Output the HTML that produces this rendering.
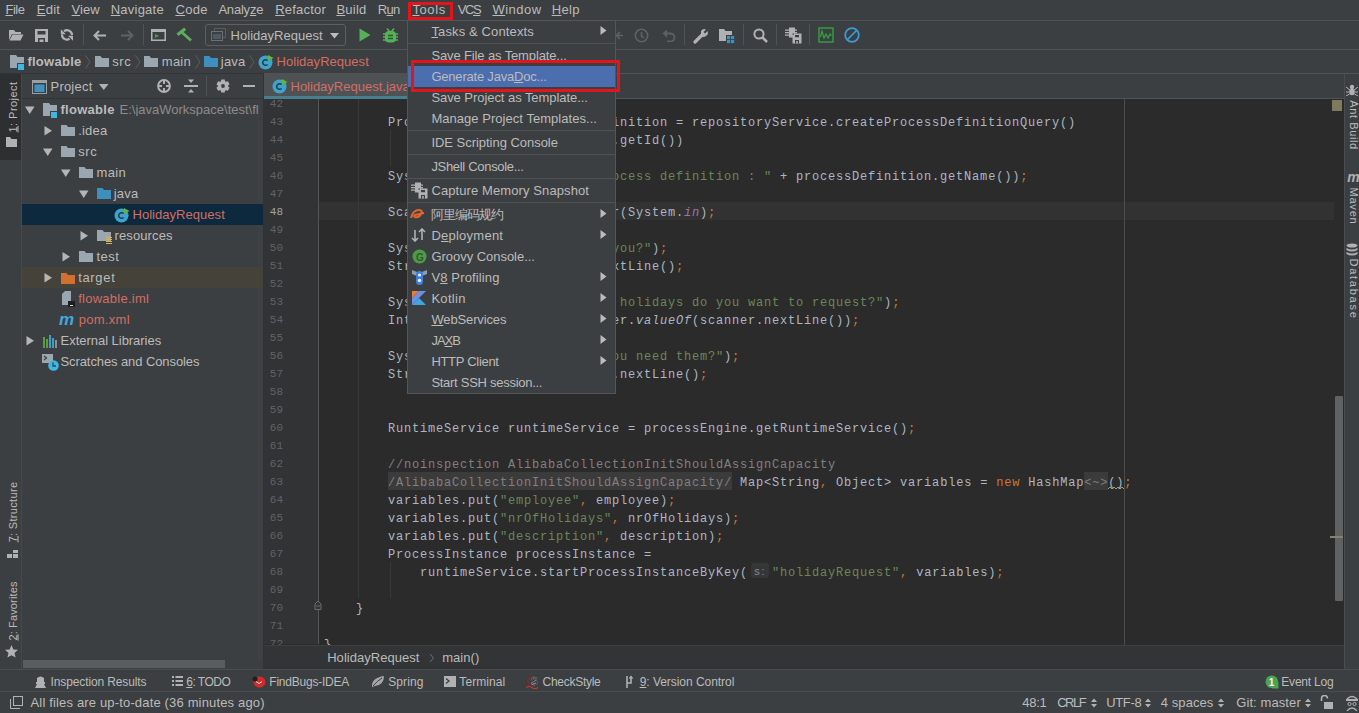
<!DOCTYPE html>
<html><head><meta charset="utf-8"><style>
html,body{margin:0;padding:0;}
body{width:1359px;height:713px;overflow:hidden;position:relative;background:#3C3F41;font-family:"Liberation Sans",sans-serif;color:#BBBBBB;}
div{position:absolute;box-sizing:border-box;}
.t{white-space:pre;}
.m{font-family:"Liberation Mono",monospace;}
u{text-decoration:underline;text-underline-offset:1px;text-decoration-thickness:1px;}
</style></head><body>
<div class="t" style="left:5.4px;top:3px;font-size:13px;line-height:13px;color:#BBBBBB;letter-spacing:-0.431px;"><u>F</u>ile</div><div class="t" style="left:36.7px;top:3px;font-size:13px;line-height:13px;color:#BBBBBB;letter-spacing:0.285px;"><u>E</u>dit</div><div class="t" style="left:71.60000000000001px;top:3px;font-size:13px;line-height:13px;color:#BBBBBB;letter-spacing:0.036px;"><u>V</u>iew</div><div class="t" style="left:110.7px;top:3px;font-size:13px;line-height:13px;color:#BBBBBB;letter-spacing:0.235px;"><u>N</u>avigate</div><div class="t" style="left:175.39999999999998px;top:3px;font-size:13px;line-height:13px;color:#BBBBBB;letter-spacing:0.361px;"><u>C</u>ode</div><div class="t" style="left:218.39999999999998px;top:3px;font-size:13px;line-height:13px;color:#BBBBBB;letter-spacing:-0.198px;">Analy<u>z</u>e</div><div class="t" style="left:275.2px;top:3px;font-size:13px;line-height:13px;color:#BBBBBB;letter-spacing:0.203px;"><u>R</u>efactor</div><div class="t" style="left:336.4px;top:3px;font-size:13px;line-height:13px;color:#BBBBBB;letter-spacing:0.235px;"><u>B</u>uild</div><div class="t" style="left:377.8px;top:3px;font-size:13px;line-height:13px;color:#BBBBBB;letter-spacing:-0.700px;">R<u>u</u>n</div><div class="t" style="left:412.4px;top:3px;font-size:13px;line-height:13px;color:#BBBBBB;letter-spacing:0.600px;"><u>T</u>ools</div><div class="t" style="left:457.7px;top:3px;font-size:13px;line-height:13px;color:#BBBBBB;letter-spacing:-1.337px;">VC<u>S</u></div><div class="t" style="left:492.4px;top:3px;font-size:13px;line-height:13px;color:#BBBBBB;letter-spacing:0.482px;"><u>W</u>indow</div><div class="t" style="left:551.7px;top:3px;font-size:13px;line-height:13px;color:#BBBBBB;letter-spacing:0.370px;"><u>H</u>elp</div><div style="left:0px;top:20px;width:1359px;height:1px;background:#515456;"></div><div style="left:0px;top:49px;width:1359px;height:1px;background:#515456;"></div><div style="left:0px;top:73px;width:264px;height:1px;background:#323436;"></div><div style="left:264px;top:73px;width:1095px;height:1px;background:#515456;"></div><div style="left:0px;top:74px;width:21px;height:595px;background:#3C3F41;"></div><div style="left:0px;top:74px;width:21px;height:86px;background:#2D2F30;"></div><div style="left:21px;top:74px;width:1px;height:595px;background:#46494B;"></div><div style="left:22px;top:98px;width:242px;height:1px;background:#323436;"></div><div style="left:264px;top:74px;width:1080px;height:24px;background:#3C3F41;"></div><div style="left:264px;top:73px;width:144px;height:23px;background:#4E5254;"></div><div style="left:264px;top:98px;width:1080px;height:1px;background:#515456;"></div><div style="left:264px;top:96px;width:144px;height:3px;background:#4A7E8F;"></div><div style="left:258px;top:99px;width:5px;height:561px;background:#3E4143;"></div><div style="left:263px;top:74px;width:1px;height:595px;background:#323232;"></div><div style="left:264px;top:99px;width:54px;height:546px;background:#313335;"></div><div style="left:318px;top:99px;width:1px;height:546px;background:#555555;"></div><div style="left:319px;top:99px;width:1025px;height:546px;background:#2B2B2B;"></div><div style="left:1344px;top:74px;width:15px;height:595px;background:#3C3F41;"></div><div style="left:1344px;top:74px;width:1px;height:595px;background:#4A4D4F;"></div><div style="left:264px;top:645px;width:1080px;height:24px;background:#323436;"></div><div style="left:264px;top:644px;width:1080px;height:1px;background:#2B2B2B;"></div><div style="left:0px;top:669px;width:1359px;height:1px;background:#4A4D4F;"></div><div style="left:0px;top:691px;width:1359px;height:1px;background:#4A4D4F;"></div><div style="left:319px;top:202px;width:1015px;height:18px;background:#323232;"></div><div style="left:1124px;top:99px;width:1px;height:546px;background:#4D4D4D;"></div><div style="left:358px;top:99px;width:1px;height:499px;background:#393939;"></div><div style="left:390px;top:130px;width:1px;height:36px;background:#393939;"></div><div style="left:390px;top:562px;width:1px;height:36px;background:#393939;"></div><div style="left:388px;top:472px;width:344px;height:18px;background:#3B3B3B;"></div><div style="left:1084px;top:472px;width:24px;height:18px;background:#3B3B3B;"></div><div class="t m" style="left:265px;top:94.5px;width:18px;font-size:11px;line-height:18px;color:#606366;text-align:right">42</div><div class="t m" style="left:265px;top:112.5px;width:18px;font-size:11px;line-height:18px;color:#606366;text-align:right">43</div><div class="t m" style="left:265px;top:130.5px;width:18px;font-size:11px;line-height:18px;color:#606366;text-align:right">44</div><div class="t m" style="left:265px;top:148.5px;width:18px;font-size:11px;line-height:18px;color:#606366;text-align:right">45</div><div class="t m" style="left:265px;top:166.5px;width:18px;font-size:11px;line-height:18px;color:#606366;text-align:right">46</div><div class="t m" style="left:265px;top:184.5px;width:18px;font-size:11px;line-height:18px;color:#606366;text-align:right">47</div><div class="t m" style="left:265px;top:202.5px;width:18px;font-size:11px;line-height:18px;color:#A4A3A3;text-align:right">48</div><div class="t m" style="left:265px;top:220.5px;width:18px;font-size:11px;line-height:18px;color:#606366;text-align:right">49</div><div class="t m" style="left:265px;top:238.5px;width:18px;font-size:11px;line-height:18px;color:#606366;text-align:right">50</div><div class="t m" style="left:265px;top:256.5px;width:18px;font-size:11px;line-height:18px;color:#606366;text-align:right">51</div><div class="t m" style="left:265px;top:274.5px;width:18px;font-size:11px;line-height:18px;color:#606366;text-align:right">52</div><div class="t m" style="left:265px;top:292.5px;width:18px;font-size:11px;line-height:18px;color:#606366;text-align:right">53</div><div class="t m" style="left:265px;top:310.5px;width:18px;font-size:11px;line-height:18px;color:#606366;text-align:right">54</div><div class="t m" style="left:265px;top:328.5px;width:18px;font-size:11px;line-height:18px;color:#606366;text-align:right">55</div><div class="t m" style="left:265px;top:346.5px;width:18px;font-size:11px;line-height:18px;color:#606366;text-align:right">56</div><div class="t m" style="left:265px;top:364.5px;width:18px;font-size:11px;line-height:18px;color:#606366;text-align:right">57</div><div class="t m" style="left:265px;top:382.5px;width:18px;font-size:11px;line-height:18px;color:#606366;text-align:right">58</div><div class="t m" style="left:265px;top:400.5px;width:18px;font-size:11px;line-height:18px;color:#606366;text-align:right">59</div><div class="t m" style="left:265px;top:418.5px;width:18px;font-size:11px;line-height:18px;color:#606366;text-align:right">60</div><div class="t m" style="left:265px;top:436.5px;width:18px;font-size:11px;line-height:18px;color:#606366;text-align:right">61</div><div class="t m" style="left:265px;top:454.5px;width:18px;font-size:11px;line-height:18px;color:#606366;text-align:right">62</div><div class="t m" style="left:265px;top:472.5px;width:18px;font-size:11px;line-height:18px;color:#606366;text-align:right">63</div><div class="t m" style="left:265px;top:490.5px;width:18px;font-size:11px;line-height:18px;color:#606366;text-align:right">64</div><div class="t m" style="left:265px;top:508.5px;width:18px;font-size:11px;line-height:18px;color:#606366;text-align:right">65</div><div class="t m" style="left:265px;top:526.5px;width:18px;font-size:11px;line-height:18px;color:#606366;text-align:right">66</div><div class="t m" style="left:265px;top:544.5px;width:18px;font-size:11px;line-height:18px;color:#606366;text-align:right">67</div><div class="t m" style="left:265px;top:562.5px;width:18px;font-size:11px;line-height:18px;color:#606366;text-align:right">68</div><div class="t m" style="left:265px;top:580.5px;width:18px;font-size:11px;line-height:18px;color:#606366;text-align:right">69</div><div class="t m" style="left:265px;top:598.5px;width:18px;font-size:11px;line-height:18px;color:#606366;text-align:right">70</div><div class="t m" style="left:265px;top:616.5px;width:18px;font-size:11px;line-height:18px;color:#606366;text-align:right">71</div><div class="t m" style="left:265px;top:634.5px;width:18px;font-size:11px;line-height:18px;color:#606366;text-align:right">72</div><div class="t m" style="left:324px;top:114px;font-size:12px;letter-spacing:0.8px;line-height:18px;color:#A9B7C6"><span style="color:#A9B7C6;">        ProcessDefinition processDefinition = repositoryService.createProcessDefinitionQuery()</span></div><div class="t m" style="left:324px;top:132px;font-size:12px;letter-spacing:0.8px;line-height:18px;color:#A9B7C6"><span style="color:#A9B7C6;">            .deploymentId(deployment.getId())</span></div><div class="t m" style="left:324px;top:150px;font-size:12px;letter-spacing:0.8px;line-height:18px;color:#A9B7C6"><span style="color:#A9B7C6;">            .singleResult()</span><span style="color:#CC7832;">;</span></div><div class="t m" style="left:324px;top:168px;font-size:12px;letter-spacing:0.8px;line-height:18px;color:#A9B7C6"><span style="color:#A9B7C6;">        System.out.println(</span><span style="color:#6A8759;">&quot;Found process definition : &quot;</span><span style="color:#A9B7C6;"> + processDefinition.getName())</span><span style="color:#CC7832;">;</span></div><div class="t m" style="left:324px;top:204px;font-size:12px;letter-spacing:0.8px;line-height:18px;color:#A9B7C6"><span style="color:#A9B7C6;">        Scanner scanner = </span><span style="color:#CC7832;">new</span><span style="color:#A9B7C6;"> Scanner(System.</span><span style="color:#9876AA;font-style:italic">in</span><span style="color:#A9B7C6;">)</span><span style="color:#CC7832;">;</span></div><div class="t m" style="left:324px;top:240px;font-size:12px;letter-spacing:0.8px;line-height:18px;color:#A9B7C6"><span style="color:#A9B7C6;">        System.out.println(</span><span style="color:#6A8759;">&quot;Who are you?&quot;</span><span style="color:#A9B7C6;">)</span><span style="color:#CC7832;">;</span></div><div class="t m" style="left:324px;top:258px;font-size:12px;letter-spacing:0.8px;line-height:18px;color:#A9B7C6"><span style="color:#A9B7C6;">        String employee = scanner.nextLine()</span><span style="color:#CC7832;">;</span></div><div class="t m" style="left:324px;top:294px;font-size:12px;letter-spacing:0.8px;line-height:18px;color:#A9B7C6"><span style="color:#A9B7C6;">        System.out.println(</span><span style="color:#6A8759;">&quot;How many holidays do you want to request?&quot;</span><span style="color:#A9B7C6;">)</span><span style="color:#CC7832;">;</span></div><div class="t m" style="left:324px;top:312px;font-size:12px;letter-spacing:0.8px;line-height:18px;color:#A9B7C6"><span style="color:#A9B7C6;">        Integer nrOfHolidays = Integer.</span><span style="color:#A9B7C6;font-style:italic">valueOf</span><span style="color:#A9B7C6;">(scanner.nextLine())</span><span style="color:#CC7832;">;</span></div><div class="t m" style="left:324px;top:348px;font-size:12px;letter-spacing:0.8px;line-height:18px;color:#A9B7C6"><span style="color:#A9B7C6;">        System.out.println(</span><span style="color:#6A8759;">&quot;Why do you need them?&quot;</span><span style="color:#A9B7C6;">)</span><span style="color:#CC7832;">;</span></div><div class="t m" style="left:324px;top:366px;font-size:12px;letter-spacing:0.8px;line-height:18px;color:#A9B7C6"><span style="color:#A9B7C6;">        String description = scanner.nextLine()</span><span style="color:#CC7832;">;</span></div><div class="t m" style="left:324px;top:420px;font-size:12px;letter-spacing:0.8px;line-height:18px;color:#A9B7C6"><span style="color:#A9B7C6;">        RuntimeService runtimeService = processEngine.getRuntimeService()</span><span style="color:#CC7832;">;</span></div><div class="t m" style="left:324px;top:456px;font-size:12px;letter-spacing:0.8px;line-height:18px;color:#A9B7C6"><span style="color:#A9B7C6;">        </span><span style="color:#808080;">//noinspection AlibabaCollectionInitShouldAssignCapacity</span></div><div class="t m" style="left:324px;top:474px;font-size:12px;letter-spacing:0.8px;line-height:18px;color:#A9B7C6"><span style="color:#A9B7C6;">        </span><span style="color:#808080;">/AlibabaCollectionInitShouldAssignCapacity/</span><span style="color:#A9B7C6;"> Map&lt;String</span><span style="color:#CC7832;">,</span><span style="color:#A9B7C6;"> Object&gt; variables = </span><span style="color:#CC7832;">new</span><span style="color:#A9B7C6;"> HashMap</span><span style="color:#808080;">&lt;~&gt;</span><span style="color:#A9B7C6;">()</span><span style="color:#CC7832;">;</span></div><div class="t m" style="left:324px;top:492px;font-size:12px;letter-spacing:0.8px;line-height:18px;color:#A9B7C6"><span style="color:#A9B7C6;">        variables.put(</span><span style="color:#6A8759;">&quot;employee&quot;</span><span style="color:#CC7832;">,</span><span style="color:#A9B7C6;"> employee)</span><span style="color:#CC7832;">;</span></div><div class="t m" style="left:324px;top:510px;font-size:12px;letter-spacing:0.8px;line-height:18px;color:#A9B7C6"><span style="color:#A9B7C6;">        variables.put(</span><span style="color:#6A8759;">&quot;nrOfHolidays&quot;</span><span style="color:#CC7832;">,</span><span style="color:#A9B7C6;"> nrOfHolidays)</span><span style="color:#CC7832;">;</span></div><div class="t m" style="left:324px;top:528px;font-size:12px;letter-spacing:0.8px;line-height:18px;color:#A9B7C6"><span style="color:#A9B7C6;">        variables.put(</span><span style="color:#6A8759;">&quot;description&quot;</span><span style="color:#CC7832;">,</span><span style="color:#A9B7C6;"> description)</span><span style="color:#CC7832;">;</span></div><div class="t m" style="left:324px;top:546px;font-size:12px;letter-spacing:0.8px;line-height:18px;color:#A9B7C6"><span style="color:#A9B7C6;">        ProcessInstance processInstance =</span></div><div class="t m" style="left:324px;top:564px;font-size:12px;letter-spacing:0.8px;line-height:18px;color:#A9B7C6"><span style="color:#A9B7C6;">            runtimeService.startProcessInstanceByKey(</span><span style="color:#A9B7C6;">   </span><span style="color:#6A8759;">&quot;holidayRequest&quot;</span><span style="color:#CC7832;">,</span><span style="color:#A9B7C6;"> variables)</span><span style="color:#CC7832;">;</span></div><div class="t m" style="left:324px;top:600px;font-size:12px;letter-spacing:0.8px;line-height:18px;color:#A9B7C6"><span style="color:#A9B7C6;">    }</span></div><div class="t m" style="left:324px;top:636px;font-size:12px;letter-spacing:0.8px;line-height:18px;color:#A9B7C6"><span style="color:#A9B7C6;">}</span></div><div style="left:751px;top:563px;width:18px;height:15px;background:#363636;border-radius:3px"></div><div class="t" style="left:754.3px;top:566px;font-size:11px;line-height:11px;color:#8A8A8A;letter-spacing:1.758px;">s:</div><div style="left:264px;top:645px;width:1080px;height:24px;background:#323436;"></div><div style="left:264px;top:645px;width:1080px;height:1px;background:#3E4042;"></div><div style="left:264px;top:667px;width:1080px;height:2px;background:#2F3133;"></div><div class="t" style="left:327.2px;top:651px;font-size:13px;line-height:13px;color:#BBBBBB;letter-spacing:0.037px;">HolidayRequest</div><div class="t" style="left:442.2px;top:651px;font-size:13px;line-height:13px;color:#BBBBBB;letter-spacing:0.063px;">main()</div><svg style="position:absolute;left:429px;top:653px;" width="6" height="10" viewBox="0 0 6 10"><path d="M1 1 L4.5 5 L1 9" stroke="#6E6E6E" fill="none" stroke-width="1"/></svg><div style="left:1335px;top:396px;width:8px;height:205px;background:#5F6163;border-radius:1px"></div><div style="left:1332px;top:100px;width:10px;height:11px;background:#7F7A5E;"></div><div style="left:1330px;top:536px;width:13px;height:2px;background:#858270;"></div><svg style="position:absolute;left:9px;top:30px;" width="15" height="11" viewBox="0 0 15 11"><path d="M0 0 H5 L6.5 2 H12 V4 H3 L0 10 Z" fill="#AFB1B3"/><path d="M3.5 4.5 H14.5 L11.5 10.5 H0.5 Z" fill="#AFB1B3"/></svg><svg style="position:absolute;left:35px;top:29px;" width="13" height="13" viewBox="0 0 13 13"><path d="M0 0 H13 V13 H0 Z M2.5 2 V5.5 H10.5 V2 Z M3 9 V13 H10 V9 Z" fill="#AFB1B3" fill-rule="evenodd"/><rect x="4.5" y="10.5" width="4" height="2.5" fill="#AFB1B3"/></svg><svg style="position:absolute;left:60px;top:28px;" width="14" height="14" viewBox="0 0 14 14"><path d="M4 3.3 A4.9 4.9 0 0 1 12 7" stroke="#AFB1B3" stroke-width="2.2" fill="none"/><path d="M2 6.5 A4.9 4.9 0 0 0 9.5 10.8" stroke="#AFB1B3" stroke-width="2.2" fill="none"/><path d="M0.8 1.2 V6.2 H5.8 Z" fill="#AFB1B3"/><path d="M13 12.8 V7.8 H8 Z" fill="#AFB1B3"/></svg><div style="left:83px;top:24px;width:1px;height:21px;background:#515456;"></div><svg style="position:absolute;left:93px;top:30px;" width="14" height="11" viewBox="0 0 14 11"><path d="M13 5.5 H2 M6 1 L1.5 5.5 L6 10" stroke="#AFB1B3" stroke-width="2" fill="none"/></svg><svg style="position:absolute;left:120px;top:30px;" width="14" height="11" viewBox="0 0 14 11"><path d="M1 5.5 H12 M8 1 L12.5 5.5 L8 10" stroke="#5E6163" stroke-width="2" fill="none"/></svg><div style="left:143px;top:24px;width:1px;height:21px;background:#515456;"></div><svg style="position:absolute;left:151px;top:29px;" width="15" height="12" viewBox="0 0 15 12"><rect x="0.75" y="0.75" width="13.5" height="10.5" fill="none" stroke="#AFB1B3" stroke-width="1.5"/><rect x="1" y="1" width="13" height="2" fill="#AFB1B3"/><path d="M4 5 L8 7 L4 9 Z" fill="#499C54"/></svg><svg style="position:absolute;left:176px;top:27px;" width="17" height="16" viewBox="0 0 17 16"><path d="M1.5 7.8 L9.2 1.8" stroke="#5BAE5F" stroke-width="3.2"/><path d="M5.5 5 L15 13.5" stroke="#5BAE5F" stroke-width="2.8"/></svg><div style="left:205px;top:24px;width:141px;height:22px;background:transparent;border:1px solid #5E6060;border-radius:3px"></div><svg style="position:absolute;left:211px;top:28px;" width="15" height="13" viewBox="0 0 15 13"><rect x="3.5" y="0.5" width="11" height="9" fill="none" stroke="#5A5D5F"/><rect x="0.5" y="3.5" width="11" height="9" fill="#3C3F41" stroke="#6C7072"/><rect x="2" y="6" width="8" height="5" fill="#4D5B66"/></svg><div class="t" style="left:230.6px;top:29px;font-size:13px;line-height:13px;color:#BBBBBB;letter-spacing:0.014px;">HolidayRequest</div><svg style="position:absolute;left:330px;top:33px;" width="9" height="6" viewBox="0 0 9 6"><path d="M0 0 H9 L4.5 5.5 Z" fill="#BBBBBB"/></svg><svg style="position:absolute;left:359px;top:28px;" width="12" height="14" viewBox="0 0 12 14"><path d="M0.5 0.5 L11.5 7 L0.5 13.5 Z" fill="#55B058"/></svg><svg style="position:absolute;left:383px;top:28px;" width="15" height="15" viewBox="0 0 15 15"><rect x="2" y="3" width="11" height="11.5" rx="4" fill="#55B058"/><path d="M4 0.5 L6.5 3.5 M11 0.5 L8.5 3.5" stroke="#55B058" stroke-width="1.6"/><path d="M0 6 H3 M0 9 H3 M0 12 H3 M12 6 H15 M12 9 H15 M12 12 H15" stroke="#55B058" stroke-width="1.5"/><path d="M5 7.5 H10 M5 10.5 H10" stroke="#2E5A30" stroke-width="1.3"/></svg><svg style="position:absolute;left:615px;top:30px;" width="9" height="11" viewBox="0 0 9 11"><path d="M8 5.5 H2 M5 2 L1.5 5.5 L5 9" stroke="#5E6163" stroke-width="1.6" fill="none"/><path d="M0.5 0 V11" stroke="#5E6163" stroke-width="1.2"/></svg><svg style="position:absolute;left:634px;top:28px;" width="15" height="15" viewBox="0 0 15 15"><circle cx="7.5" cy="7.5" r="6.2" stroke="#5E6163" stroke-width="1.6" fill="none"/><path d="M7.5 4 V8 L10 10" stroke="#5E6163" stroke-width="1.6" fill="none"/></svg><svg style="position:absolute;left:662px;top:29px;" width="14" height="13" viewBox="0 0 14 13"><path d="M4 4.5 H8.5 A4 4 0 0 1 8.5 12.5 H5" stroke="#5E6163" stroke-width="1.8" fill="none"/><path d="M0.5 4.5 L5 0.5 V8.5 Z" fill="#5E6163"/></svg><div style="left:684px;top:24px;width:1px;height:21px;background:#515456;"></div><svg style="position:absolute;left:693px;top:28px;" width="16" height="16" viewBox="0 0 16 16"><path d="M2 14 L9 7" stroke="#AFB1B3" stroke-width="3.2" stroke-linecap="round"/><path d="M8 3 A4 4 0 0 1 13 1.5 L10.5 4 L12 5.5 L14.5 3 A4 4 0 0 1 13 8 A4 4 0 0 1 8 8 Z" fill="#AFB1B3"/></svg><svg style="position:absolute;left:719px;top:28px;" width="16" height="16" viewBox="0 0 16 16"><path d="M0 1 H5 L6.5 3 H13 V7 H7 V13 H0 Z" fill="#AFB1B3"/><rect x="8" y="8" width="3.2" height="3.2" fill="#3592C4"/><rect x="12" y="8" width="3.2" height="3.2" fill="#3592C4"/><rect x="8" y="12" width="3.2" height="3.2" fill="#3592C4"/><rect x="12" y="12" width="3.2" height="3.2" fill="#3592C4"/></svg><div style="left:743px;top:24px;width:1px;height:21px;background:#515456;"></div><svg style="position:absolute;left:753px;top:28px;" width="15" height="15" viewBox="0 0 15 15"><circle cx="6" cy="6" r="4.6" stroke="#AFB1B3" stroke-width="2" fill="none"/><path d="M9.5 9.5 L14 14" stroke="#AFB1B3" stroke-width="2.6"/></svg><div style="left:776px;top:24px;width:1px;height:21px;background:#515456;"></div><svg style="position:absolute;left:785px;top:27px;" width="17" height="17" viewBox="0 0 17 17"><path d="M0 3.2 H12 M0 5.7 H12 M0 8.2 H12" stroke="#AFB1B3" stroke-width="1.2"/><rect x="4" y="0.5" width="6" height="10" fill="#AFB1B3"/><rect x="7.5" y="6.5" width="9" height="10" fill="#AFB1B3"/><rect x="7.5" y="6.5" width="1.5" height="1.2" fill="#3C3F41"/><rect x="10" y="8" width="4" height="2.2" fill="#3C3F41"/><rect x="10" y="13" width="4" height="3.5" fill="#3C3F41"/><rect x="11.2" y="14" width="1.6" height="2.5" fill="#AFB1B3"/></svg><div style="left:809px;top:24px;width:1px;height:21px;background:#515456;"></div><svg style="position:absolute;left:818px;top:27px;" width="16" height="16" viewBox="0 0 16 16"><rect x="1" y="1" width="14" height="14" fill="none" stroke="#33A23F" stroke-width="1.4"/><path d="M2.5 10 L4 4 L6 11 L8 7 L10 11 L12 7 L13.5 9" stroke="#33A23F" stroke-width="1.2" fill="none"/></svg><svg style="position:absolute;left:844px;top:27px;" width="16" height="16" viewBox="0 0 16 16"><circle cx="8" cy="8" r="6.8" stroke="#3D9BD6" stroke-width="1.7" fill="none"/><path d="M3.5 12.5 L12.5 3.5" stroke="#3D9BD6" stroke-width="1.7"/></svg><svg style="position:absolute;left:10px;top:55px;" width="15" height="15" viewBox="0 0 15 15"><path d="M0 0 H6 L7.5 2 H14 V8 H7 V13 H0 Z" fill="#9AA7B0"/><rect x="8" y="9" width="6" height="6" fill="#40B6E0"/></svg><div class="t" style="left:27.4px;top:55px;font-size:13px;line-height:13px;color:#BBBBBB;font-weight:bold;letter-spacing:0.263px;">flowable</div><svg style="position:absolute;left:85px;top:55px;" width="6" height="14" viewBox="0 0 6 14"><path d="M0.5 0.5 L5 7 L0.5 13.5" stroke="#5C5F61" fill="none" stroke-width="1"/></svg><svg style="position:absolute;left:95px;top:56px;" width="14" height="11" viewBox="0 0 14 11"><path d="M0 0 H5.5 L7 2 H14 V11 H0 Z" fill="#9AA7B0"/></svg><div class="t" style="left:112.2px;top:55px;font-size:13px;line-height:13px;color:#BBBBBB;letter-spacing:0.608px;">src</div><svg style="position:absolute;left:135px;top:55px;" width="6" height="14" viewBox="0 0 6 14"><path d="M0.5 0.5 L5 7 L0.5 13.5" stroke="#5C5F61" fill="none" stroke-width="1"/></svg><svg style="position:absolute;left:144px;top:56px;" width="14" height="11" viewBox="0 0 14 11"><path d="M0 0 H5.5 L7 2 H14 V11 H0 Z" fill="#9AA7B0"/></svg><div class="t" style="left:161.79999999999998px;top:55px;font-size:13px;line-height:13px;color:#BBBBBB;letter-spacing:0.257px;">main</div><svg style="position:absolute;left:195px;top:55px;" width="6" height="14" viewBox="0 0 6 14"><path d="M0.5 0.5 L5 7 L0.5 13.5" stroke="#5C5F61" fill="none" stroke-width="1"/></svg><svg style="position:absolute;left:203.7px;top:56px;" width="14" height="11" viewBox="0 0 14 11"><path d="M0 0 H5.5 L7 2 H14 V11 H0 Z" fill="#3D8FBD"/></svg><div class="t" style="left:220.79999999999998px;top:55px;font-size:13px;line-height:13px;color:#BBBBBB;letter-spacing:0.200px;">java</div><svg style="position:absolute;left:249px;top:55px;" width="6" height="14" viewBox="0 0 6 14"><path d="M0.5 0.5 L5 7 L0.5 13.5" stroke="#5C5F61" fill="none" stroke-width="1"/></svg><svg style="position:absolute;left:258px;top:54px;" width="16" height="16" viewBox="0 0 16 16"><circle cx="7.5" cy="8.5" r="7" fill="#40A3C9"/><path d="M9.6 6.6 A2.8 2.8 0 1 0 9.6 10.4" stroke="#1E3D52" stroke-width="1.5" fill="none"/><path d="M10 1 L15.5 4 L10 7 Z" fill="#62B543"/></svg><div class="t" style="left:276.59999999999997px;top:55px;font-size:13px;line-height:13px;color:#D26E63;letter-spacing:0.029px;">HolidayRequest</div><div class="t" style="left:3px;top:143px;width:16px;height:16px;"></div><div style="left:12.6px;top:107.36951388888887px;width:0;height:0"><div class="t" style="left:0;top:0;font-size:11px;line-height:11px;color:#BBBBBB;letter-spacing:0.439px;transform:translate(-50%,-50%) rotate(-90deg)"><u>1</u>: Project</div></div><div style="left:12.6px;top:511.6573011363636px;width:0;height:0"><div class="t" style="left:0;top:0;font-size:11px;line-height:11px;color:#BBBBBB;letter-spacing:0.315px;transform:translate(-50%,-50%) rotate(-90deg)"><u>7</u>: Structure</div></div><div style="left:12.6px;top:610.9205113636364px;width:0;height:0"><div class="t" style="left:0;top:0;font-size:11px;line-height:11px;color:#BBBBBB;letter-spacing:0.141px;transform:translate(-50%,-50%) rotate(-90deg)"><u>2</u>: Favorites</div></div><div style="left:1353px;top:125.006953125px;width:0;height:0"><div class="t" style="left:0;top:0;font-size:11px;line-height:11px;color:#BBBBBB;letter-spacing:0.586px;transform:translate(-50%,-50%) rotate(90deg)">Ant Build</div></div><div style="left:1353px;top:206.08890625px;width:0;height:0"><div class="t" style="left:0;top:0;font-size:11px;line-height:11px;color:#BBBBBB;letter-spacing:0.822px;transform:translate(-50%,-50%) rotate(90deg)">Maven</div></div><div style="left:1353px;top:289.12669642857145px;width:0;height:0"><div class="t" style="left:0;top:0;font-size:11px;line-height:11px;color:#BBBBBB;letter-spacing:1.747px;transform:translate(-50%,-50%) rotate(90deg)">Database</div></div><svg style="position:absolute;left:6px;top:137px;" width="11" height="10" viewBox="0 0 11 10"><path d="M0 0 H4 L5.5 2 H11 V10 H0 Z" fill="#AFB1B3"/></svg><svg style="position:absolute;left:7px;top:550px;" width="12" height="8" viewBox="0 0 12 8"><rect x="0" y="4" width="5" height="4" fill="#AFB1B3"/><rect x="6" y="4" width="5" height="4" fill="#AFB1B3"/><rect x="6" y="0" width="5" height="3" fill="#AFB1B3"/></svg><svg style="position:absolute;left:5px;top:645px;" width="13" height="13" viewBox="0 0 13 13"><path d="M6.5 0 L8.4 4.4 L13 4.8 L9.5 8 L10.6 12.6 L6.5 10.2 L2.4 12.6 L3.5 8 L0 4.8 L4.6 4.4 Z" fill="#AFB1B3"/></svg><svg style="position:absolute;left:32px;top:80px;" width="15" height="14" viewBox="0 0 15 14"><rect x="0.5" y="0.5" width="14" height="13" fill="none" stroke="#9C9EA0"/><rect x="1" y="1" width="13" height="2" fill="#9C9EA0"/><rect x="2" y="4" width="11" height="8.5" fill="#4690BA" stroke="#27465A" stroke-width="1"/></svg><div class="t" style="left:50.5px;top:80px;font-size:13px;line-height:13px;color:#BBBBBB;letter-spacing:0.215px;">Project</div><svg style="position:absolute;left:99px;top:84px;" width="10" height="7" viewBox="0 0 10 7"><path d="M0 0 H9.5 L4.75 6 Z" fill="#AFB1B3"/></svg><svg style="position:absolute;left:157px;top:79px;" width="14" height="14" viewBox="0 0 14 14"><circle cx="7" cy="7" r="5.9" stroke="#AFB1B3" stroke-width="2" fill="none"/><path d="M7 1 V5 M7 9 V13 M1 7 H5 M9 7 H13" stroke="#AFB1B3" stroke-width="2"/></svg><svg style="position:absolute;left:184px;top:79px;" width="14" height="14" viewBox="0 0 14 14"><path d="M0 7 H14" stroke="#AFB1B3" stroke-width="2"/><path d="M4 0.5 H10 L7 4 Z M4 13.5 H10 L7 10 Z" fill="#AFB1B3"/></svg><div style="left:206px;top:76px;width:1px;height:20px;background:#515456;"></div><svg style="position:absolute;left:216px;top:79px;" width="14" height="14" viewBox="0 0 14 14"><path d="M5.35 0.40 L8.65 0.40 L9.19 2.51 L9.80 2.85 L11.89 2.28 L13.54 5.13 L11.99 6.65 L11.99 7.35 L13.54 8.87 L11.89 11.72 L9.80 11.15 L9.19 11.49 L8.65 13.60 L5.35 13.60 L4.81 11.49 L4.20 11.15 L2.11 11.72 L0.46 8.87 L2.01 7.35 L2.01 6.65 L0.46 5.13 L2.11 2.28 L4.20 2.85 L4.81 2.51 Z" fill="#AFB1B3"/><circle cx="7" cy="7" r="1.9" fill="#3C3F41"/></svg><div style="left:243px;top:85px;width:12px;height:2px;background:#AFB1B3;"></div><div style="left:22px;top:204px;width:241px;height:21px;background:#0D293E;"></div><div style="left:22px;top:267px;width:241px;height:21px;background:#45423A;"></div><svg style="position:absolute;left:25px;top:106px;" width="10" height="9" viewBox="0 0 10 9"><path d="M0 0.5 H9.5 L4.75 8 Z" fill="#B3B5B7"/></svg><svg style="position:absolute;left:43px;top:103px;" width="15" height="15" viewBox="0 0 15 15"><path d="M0 0 H6 L7.5 2 H14 V8 H7 V13 H0 Z" fill="#9AA7B0"/><rect x="8" y="9" width="6" height="6" fill="#40B6E0"/></svg><div class="t" style="left:60.400000000000006px;top:103px;font-size:13px;line-height:13px;color:#BBBBBB;font-weight:bold;letter-spacing:0.292px;">flowable</div><div class="t" style="left:119.5px;top:103px;font-size:13px;line-height:13px;color:#8C8C8C;width:143px;overflow:hidden;">E:\javaWorkspace\test\flowable</div><div style="left:259px;top:99px;width:4px;height:21px;background:#3C3F41;"></div><svg style="position:absolute;left:44px;top:126px;" width="9" height="10" viewBox="0 0 9 10"><path d="M0.5 0 V9.5 L8 4.75 Z" fill="#B3B5B7"/></svg><svg style="position:absolute;left:61px;top:125px;" width="14" height="11" viewBox="0 0 14 11"><path d="M0 0 H5.5 L7 2 H14 V11 H0 Z" fill="#9AA7B0"/></svg><div class="t" style="left:78.2px;top:124px;font-size:13px;line-height:13px;color:#BBBBBB;letter-spacing:0.189px;">.idea</div><svg style="position:absolute;left:43px;top:148px;" width="10" height="9" viewBox="0 0 10 9"><path d="M0 0.5 H9.5 L4.75 8 Z" fill="#B3B5B7"/></svg><svg style="position:absolute;left:61px;top:146px;" width="14" height="11" viewBox="0 0 14 11"><path d="M0 0 H5.5 L7 2 H14 V11 H0 Z" fill="#9AA7B0"/></svg><div class="t" style="left:78.2px;top:145px;font-size:13px;line-height:13px;color:#BBBBBB;letter-spacing:0.608px;">src</div><svg style="position:absolute;left:61px;top:169px;" width="10" height="9" viewBox="0 0 10 9"><path d="M0 0.5 H9.5 L4.75 8 Z" fill="#B3B5B7"/></svg><svg style="position:absolute;left:79px;top:167px;" width="14" height="11" viewBox="0 0 14 11"><path d="M0 0 H5.5 L7 2 H14 V11 H0 Z" fill="#9AA7B0"/></svg><div class="t" style="left:96.60000000000001px;top:166px;font-size:13px;line-height:13px;color:#BBBBBB;letter-spacing:0.291px;">main</div><svg style="position:absolute;left:79px;top:190px;" width="10" height="9" viewBox="0 0 10 9"><path d="M0 0.5 H9.5 L4.75 8 Z" fill="#B3B5B7"/></svg><svg style="position:absolute;left:97px;top:188px;" width="14" height="11" viewBox="0 0 14 11"><path d="M0 0 H5.5 L7 2 H14 V11 H0 Z" fill="#3D8FBD"/></svg><div class="t" style="left:113.7px;top:187px;font-size:13px;line-height:13px;color:#BBBBBB;letter-spacing:0.234px;">java</div><svg style="position:absolute;left:114px;top:207px;" width="16" height="16" viewBox="0 0 16 16"><circle cx="7.5" cy="8.5" r="7" fill="#40A3C9"/><path d="M9.6 6.6 A2.8 2.8 0 1 0 9.6 10.4" stroke="#1E3D52" stroke-width="1.5" fill="none"/><path d="M10 1 L15.5 4 L10 7 Z" fill="#62B543"/></svg><div class="t" style="left:132.5px;top:208px;font-size:13px;line-height:13px;color:#D26E63;letter-spacing:0.037px;">HolidayRequest</div><svg style="position:absolute;left:80px;top:231px;" width="9" height="10" viewBox="0 0 9 10"><path d="M0.5 0 V9.5 L8 4.75 Z" fill="#B3B5B7"/></svg><svg style="position:absolute;left:97px;top:230px;" width="14" height="11" viewBox="0 0 14 11"><path d="M0 0 H5.5 L7 2 H14 V11 H0 Z" fill="#9AA7B0"/></svg><svg style="position:absolute;left:105px;top:236px;" width="8" height="8" viewBox="0 0 8 8"><path d="M1 1.5 H7 M1 3.5 H7 M1 5.5 H7 M1 7.5 H7" stroke="#E3B341" stroke-width="1.2"/></svg><div class="t" style="left:114.60000000000001px;top:229px;font-size:13px;line-height:13px;color:#BBBBBB;letter-spacing:0.098px;">resources</div><svg style="position:absolute;left:62px;top:252px;" width="9" height="10" viewBox="0 0 9 10"><path d="M0.5 0 V9.5 L8 4.75 Z" fill="#B3B5B7"/></svg><svg style="position:absolute;left:79px;top:251px;" width="14" height="11" viewBox="0 0 14 11"><path d="M0 0 H5.5 L7 2 H14 V11 H0 Z" fill="#9AA7B0"/></svg><div class="t" style="left:96.4px;top:250px;font-size:13px;line-height:13px;color:#BBBBBB;letter-spacing:0.530px;">test</div><svg style="position:absolute;left:44px;top:273px;" width="9" height="10" viewBox="0 0 9 10"><path d="M0.5 0 V9.5 L8 4.75 Z" fill="#B3B5B7"/></svg><svg style="position:absolute;left:61px;top:273px;" width="14" height="11" viewBox="0 0 14 11"><path d="M0 0 H5.5 L7 2 H14 V11 H0 Z" fill="#D2712F"/></svg><div class="t" style="left:78.2px;top:271px;font-size:13px;line-height:13px;color:#BBBBBB;letter-spacing:0.662px;">target</div><svg style="position:absolute;left:62px;top:291px;" width="13" height="16" viewBox="0 0 13 16"><path d="M0 3 L3 0 H9 V14 H0 Z" fill="#9AA7B0"/><rect x="6" y="10" width="7" height="6" fill="#1E1E1E"/><rect x="8" y="14" width="3" height="1" fill="#DDDDDD"/></svg><div class="t" style="left:78.2px;top:292px;font-size:13px;line-height:13px;color:#D26E63;letter-spacing:0.258px;">flowable.iml</div><div class="t" style="left:59.0px;top:311px;font-size:17px;line-height:17px;color:#40A8DC;font-weight:bold;font-style:italic;">m</div><div class="t" style="left:78.7px;top:313px;font-size:13px;line-height:13px;color:#D26E63;letter-spacing:0.289px;">pom.xml</div><svg style="position:absolute;left:26px;top:336px;" width="9" height="10" viewBox="0 0 9 10"><path d="M0.5 0 V9.5 L8 4.75 Z" fill="#B3B5B7"/></svg><svg style="position:absolute;left:43px;top:335px;" width="14" height="13" viewBox="0 0 14 13"><path d="M1 2 V13" stroke="#62B543" stroke-width="1.6"/><path d="M4 4 V13" stroke="#62B543" stroke-width="1.6"/><path d="M7 0 V13" stroke="#40B6E0" stroke-width="1.6"/><path d="M10 3 V13" stroke="#40B6E0" stroke-width="1.6"/><path d="M13 5 V13" stroke="#9AA7B0" stroke-width="1.6"/></svg><div class="t" style="left:60.6px;top:334px;font-size:13px;line-height:13px;color:#BBBBBB;letter-spacing:-0.035px;">External Libraries</div><svg style="position:absolute;left:42px;top:354px;" width="17" height="17" viewBox="0 0 17 17"><rect x="0" y="0" width="11" height="9" fill="#9AA7B0"/><path d="M2 2 L4.5 4 L2 6" stroke="#3C3F41" fill="none" stroke-width="1.2"/><circle cx="11.5" cy="11.5" r="5.3" fill="#40B6E0"/><path d="M11 8.5 V12 H14" stroke="#1F4A63" stroke-width="1.3" fill="none"/></svg><div class="t" style="left:60.5px;top:355px;font-size:13px;line-height:13px;color:#BBBBBB;letter-spacing:-0.093px;">Scratches and Consoles</div><div style="left:23px;top:660px;width:202px;height:8px;background:#5A5D5F;"></div><svg style="position:absolute;left:272px;top:78px;" width="16" height="16" viewBox="0 0 16 16"><circle cx="7.5" cy="8.5" r="7" fill="#40A3C9"/><path d="M9.6 6.6 A2.8 2.8 0 1 0 9.6 10.4" stroke="#1E3D52" stroke-width="1.5" fill="none"/><path d="M10 1 L15.5 4 L10 7 Z" fill="#62B543"/></svg><div class="t" style="left:290.5px;top:80px;font-size:13px;line-height:13px;color:#D26E63;">HolidayRequest.java</div><svg style="position:absolute;left:314px;top:600px;" width="8" height="10" viewBox="0 0 8 10"><path d="M1 9.5 V4 L4 1 L7 4 V9.5 Z" fill="#313335" stroke="#6E6E6E"/><path d="M2 6 H6" stroke="#6E6E6E"/></svg><svg style="position:absolute;left:1108px;top:486px;" width="16" height="4" viewBox="0 0 16 4"><path d="M0 3 L2 1 L4 3 L6 1 L8 3 L10 1 L12 3 L14 1 L16 3" stroke="#9C9C7C" fill="none" stroke-width="1"/></svg><svg style="position:absolute;left:1346px;top:84px;" width="12" height="12" viewBox="0 0 12 12"><circle cx="6" cy="3" r="2.2" fill="#AFB1B3"/><ellipse cx="6" cy="8" rx="2.8" ry="3.3" fill="#AFB1B3"/><path d="M0 3 L4 6 M12 3 L8 6 M0 8 H3 M12 8 H9 M0 12 L3.5 10 M12 12 L8.5 10" stroke="#AFB1B3" stroke-width="1"/></svg><div class="t" style="left:1347.2px;top:170px;font-size:14px;line-height:14px;color:#AFB1B3;font-weight:bold;font-style:italic;">m</div><svg style="position:absolute;left:1346px;top:243px;" width="12" height="13" viewBox="0 0 12 13"><ellipse cx="6" cy="2.5" rx="5.5" ry="2" fill="#AFB1B3"/><path d="M0.5 5 Q6 8 11.5 5 V7 Q6 10 0.5 7 Z M0.5 9 Q6 12 11.5 9 V11 Q6 14 0.5 11 Z" fill="#AFB1B3"/></svg><svg style="position:absolute;left:35px;top:676px;" width="11" height="12" viewBox="0 0 11 12"><path d="M2 2 Q5.5 -1 9 2 V6 H2 Z" fill="#AFB1B3"/><rect x="1" y="6" width="9" height="2" fill="#AFB1B3"/><path d="M0 12 L2 8 H9 L11 12 Z" fill="#AFB1B3"/></svg><div class="t" style="left:50.599999999999994px;top:676px;font-size:12px;line-height:12px;color:#BBBBBB;letter-spacing:-0.125px;">Inspection Results</div><svg style="position:absolute;left:172px;top:676px;" width="11" height="11" viewBox="0 0 11 11"><path d="M0 1 H2 M0 5 H2 M0 9 H2 M3.5 1 H11 M3.5 5 H11 M3.5 9 H11" stroke="#AFB1B3" stroke-width="1.8"/></svg><div class="t" style="left:186.3px;top:676px;font-size:12px;line-height:12px;color:#BBBBBB;letter-spacing:-0.523px;"><u>6</u>: TODO</div><svg style="position:absolute;left:252px;top:675px;" width="14" height="13" viewBox="0 0 14 13"><ellipse cx="7.5" cy="7" rx="6" ry="5.6" fill="#D12A2A"/><circle cx="3" cy="4" r="2.5" fill="#202020"/><path d="M4 6.5 L7 8.5 L10 6.5" stroke="#F0E0E0" stroke-width="1" fill="none"/></svg><div class="t" style="left:269.3px;top:676px;font-size:12px;line-height:12px;color:#BBBBBB;letter-spacing:-0.230px;">FindBugs-IDEA</div><svg style="position:absolute;left:371px;top:676px;" width="14" height="11" viewBox="0 0 14 11"><path d="M1 11 Q0 2 13 0 Q13 9 4 10 Z" fill="#A4A6A8"/><path d="M2 10 Q6 5 11 2" stroke="#3C3F41" stroke-width="1" fill="none"/></svg><div class="t" style="left:388.3px;top:676px;font-size:12px;line-height:12px;color:#BBBBBB;letter-spacing:0.070px;">Spring</div><svg style="position:absolute;left:444px;top:676px;" width="12" height="11" viewBox="0 0 12 11"><rect x="0" y="0" width="12" height="11" fill="#AFB1B3"/><path d="M2 2.5 L5 5 L2 7.5" stroke="#3C3F41" stroke-width="1.3" fill="none"/></svg><div class="t" style="left:459.3px;top:676px;font-size:12px;line-height:12px;color:#BBBBBB;letter-spacing:0.083px;">Terminal</div><svg style="position:absolute;left:526px;top:675px;" width="13" height="14" viewBox="0 0 13 14"><text x="0" y="10" font-family="Liberation Sans" font-size="10" font-weight="bold" fill="#7A2A2A">C</text><text x="5" y="10" font-family="Liberation Sans" font-size="10" font-weight="bold" fill="#151515" stroke="#BBBBBB" stroke-width="0.4">S</text><path d="M0 12.5 Q3 10.5 6 12.5 Q9 14.5 12 12.5" stroke="#CC3333" fill="none" stroke-width="1.2"/></svg><div class="t" style="left:542.5999999999999px;top:676px;font-size:12px;line-height:12px;color:#BBBBBB;letter-spacing:-0.285px;">CheckStyle</div><svg style="position:absolute;left:625px;top:675px;" width="11" height="13" viewBox="0 0 11 13"><path d="M2 13 V1 M2 8 H6 V3" stroke="#AFB1B3" stroke-width="1.6" fill="none"/><path d="M3.5 3.5 L6 0.5 L8.5 3.5 Z" fill="#AFB1B3"/></svg><div class="t" style="left:639.6999999999999px;top:676px;font-size:12px;line-height:12px;color:#BBBBBB;letter-spacing:-0.044px;"><u>9</u>: Version Control</div><svg style="position:absolute;left:1265px;top:675px;" width="14" height="14" viewBox="0 0 14 14"><circle cx="6.8" cy="6.8" r="6.3" fill="#4DA353"/><rect x="7" y="7" width="6.5" height="6.5" fill="#4DA353"/><text x="3.8" y="10.8" font-family="Liberation Sans" font-size="10" font-weight="bold" fill="#F0F0F0">1</text></svg><div class="t" style="left:1281.3px;top:676px;font-size:12px;line-height:12px;color:#BBBBBB;letter-spacing:-0.201px;">Event Log</div><svg style="position:absolute;left:10px;top:696px;" width="13" height="13" viewBox="0 0 13 13"><rect x="3.5" y="0.5" width="9" height="9" fill="none" stroke="#AFB1B3"/><path d="M0.5 3 V12.5 H10" stroke="#AFB1B3" fill="none"/></svg><div class="t" style="left:30.5px;top:696px;font-size:13px;line-height:13px;color:#BBBBBB;letter-spacing:0.161px;">All files are up-to-date (36 minutes ago)</div><div class="t" style="left:1022.2px;top:696px;font-size:13px;line-height:13px;color:#BBBBBB;letter-spacing:-0.251px;">48:1</div><div class="t" style="left:1057.2px;top:696px;font-size:13px;line-height:13px;color:#BBBBBB;letter-spacing:-1.464px;">CRLF</div><svg style="position:absolute;left:1091px;top:698px;" width="6" height="10" viewBox="0 0 6 10"><path d="M0 4 L3 0.5 L6 4 Z M0 6 L3 9.5 L6 6 Z" fill="#AFB1B3"/></svg><div class="t" style="left:1106.2px;top:696px;font-size:13px;line-height:13px;color:#BBBBBB;letter-spacing:-0.321px;">UTF-8</div><svg style="position:absolute;left:1145px;top:698px;" width="6" height="10" viewBox="0 0 6 10"><path d="M0 4 L3 0.5 L6 4 Z M0 6 L3 9.5 L6 6 Z" fill="#AFB1B3"/></svg><div class="t" style="left:1160.8px;top:696px;font-size:13px;line-height:13px;color:#BBBBBB;letter-spacing:0.073px;">4 spaces</div><svg style="position:absolute;left:1218px;top:698px;" width="6" height="10" viewBox="0 0 6 10"><path d="M0 4 L3 0.5 L6 4 Z M0 6 L3 9.5 L6 6 Z" fill="#AFB1B3"/></svg><div class="t" style="left:1236.2px;top:696px;font-size:13px;line-height:13px;color:#BBBBBB;letter-spacing:0.098px;">Git: master</div><svg style="position:absolute;left:1305px;top:698px;" width="6" height="10" viewBox="0 0 6 10"><path d="M0 4 L3 0.5 L6 4 Z M0 6 L3 9.5 L6 6 Z" fill="#AFB1B3"/></svg><svg style="position:absolute;left:1320px;top:695px;" width="13" height="14" viewBox="0 0 13 14"><path d="M1.5 6 V3.5 A3 3 0 0 1 7.5 3.5" stroke="#AFB1B3" stroke-width="1.6" fill="none"/><rect x="4" y="7" width="9" height="7" fill="#AFB1B3"/></svg><svg style="position:absolute;left:1345px;top:694px;" width="14" height="17" viewBox="0 0 14 17"><path d="M2 5 Q7 0 12 5" stroke="#AFB1B3" fill="none" stroke-width="1.3"/><rect x="1" y="5" width="12" height="2" fill="#AFB1B3"/><circle cx="4.5" cy="10" r="1.6" stroke="#AFB1B3" fill="none"/><circle cx="9.5" cy="10" r="1.6" stroke="#AFB1B3" fill="none"/><path d="M2 17 Q7 11 12 17" stroke="#AFB1B3" fill="none" stroke-width="1.3"/></svg><div style="left:408px;top:2px;width:45px;height:18px;background:transparent;border:3px solid #E3141B"></div><div style="left:407px;top:20px;width:209px;height:374px;background:#3C3F41;border:1px solid #555555"></div><div style="left:408px;top:66px;width:207px;height:21px;background:#4B6EAF;"></div><div style="left:408px;top:43px;width:207px;height:1px;background:#515151;"></div><div style="left:408px;top:130px;width:207px;height:1px;background:#515151;"></div><div style="left:408px;top:154px;width:207px;height:1px;background:#515151;"></div><div style="left:408px;top:178px;width:207px;height:1px;background:#515151;"></div><div style="left:408px;top:202px;width:207px;height:1px;background:#515151;"></div><div class="t" style="left:431.4px;top:25px;font-size:13px;line-height:13px;color:#BBBBBB;letter-spacing:0.128px;"><u>T</u>asks &amp; Contexts</div><svg style="position:absolute;left:600px;top:26px;" width="7" height="9" viewBox="0 0 7 9"><path d="M0.5 0 V9 L6.5 4.5 Z" fill="#BBBBBB"/></svg><div class="t" style="left:431.4px;top:49px;font-size:13px;line-height:13px;color:#BBBBBB;letter-spacing:-0.128px;">Save File as Template...</div><div class="t" style="left:431.4px;top:70px;font-size:13px;line-height:13px;color:#BBBBBB;letter-spacing:-0.204px;">Generate Java<u>D</u>oc...</div><div class="t" style="left:431.4px;top:91px;font-size:13px;line-height:13px;color:#BBBBBB;letter-spacing:-0.056px;">Save Project as Template...</div><div class="t" style="left:431.4px;top:112px;font-size:13px;line-height:13px;color:#BBBBBB;letter-spacing:0.040px;">Manage Project Templates...</div><div class="t" style="left:431.4px;top:136px;font-size:13px;line-height:13px;color:#BBBBBB;letter-spacing:-0.031px;">IDE Scripting Console</div><div class="t" style="left:431.4px;top:160px;font-size:13px;line-height:13px;color:#BBBBBB;letter-spacing:-0.313px;">JShell Console...</div><div class="t" style="left:431.4px;top:184px;font-size:13px;line-height:13px;color:#BBBBBB;letter-spacing:0.100px;">Capture Memory Snapshot</div><div class="t" style="left:431.4px;top:208px;font-size:13px;line-height:13px;color:#BBBBBB;letter-spacing:-0.988px;">阿里编码规约</div><svg style="position:absolute;left:600px;top:209px;" width="7" height="9" viewBox="0 0 7 9"><path d="M0.5 0 V9 L6.5 4.5 Z" fill="#BBBBBB"/></svg><div class="t" style="left:431.4px;top:229px;font-size:13px;line-height:13px;color:#BBBBBB;letter-spacing:0.243px;">D<u>e</u>ployment</div><svg style="position:absolute;left:600px;top:230px;" width="7" height="9" viewBox="0 0 7 9"><path d="M0.5 0 V9 L6.5 4.5 Z" fill="#BBBBBB"/></svg><div class="t" style="left:431.4px;top:250px;font-size:13px;line-height:13px;color:#BBBBBB;letter-spacing:-0.030px;">Groovy Console...</div><div class="t" style="left:431.4px;top:271px;font-size:13px;line-height:13px;color:#BBBBBB;letter-spacing:0.143px;">V<u>8</u> Profiling</div><svg style="position:absolute;left:600px;top:272px;" width="7" height="9" viewBox="0 0 7 9"><path d="M0.5 0 V9 L6.5 4.5 Z" fill="#BBBBBB"/></svg><div class="t" style="left:431.4px;top:292px;font-size:13px;line-height:13px;color:#BBBBBB;letter-spacing:0.306px;">Kotlin</div><svg style="position:absolute;left:600px;top:293px;" width="7" height="9" viewBox="0 0 7 9"><path d="M0.5 0 V9 L6.5 4.5 Z" fill="#BBBBBB"/></svg><div class="t" style="left:431.4px;top:313px;font-size:13px;line-height:13px;color:#BBBBBB;letter-spacing:-0.128px;"><u>W</u>ebServices</div><svg style="position:absolute;left:600px;top:314px;" width="7" height="9" viewBox="0 0 7 9"><path d="M0.5 0 V9 L6.5 4.5 Z" fill="#BBBBBB"/></svg><div class="t" style="left:431.4px;top:334px;font-size:13px;line-height:13px;color:#BBBBBB;letter-spacing:-0.985px;">JA<u>X</u>B</div><svg style="position:absolute;left:600px;top:335px;" width="7" height="9" viewBox="0 0 7 9"><path d="M0.5 0 V9 L6.5 4.5 Z" fill="#BBBBBB"/></svg><div class="t" style="left:431.4px;top:355px;font-size:13px;line-height:13px;color:#BBBBBB;letter-spacing:-0.300px;">HTTP Client</div><svg style="position:absolute;left:600px;top:356px;" width="7" height="9" viewBox="0 0 7 9"><path d="M0.5 0 V9 L6.5 4.5 Z" fill="#BBBBBB"/></svg><div class="t" style="left:431.4px;top:376px;font-size:13px;line-height:13px;color:#BBBBBB;letter-spacing:-0.277px;">Start SSH session...</div><svg style="position:absolute;left:411px;top:182px;" width="17" height="17" viewBox="0 0 17 17"><path d="M0 3.2 H12 M0 5.7 H12 M0 8.2 H12" stroke="#AFB1B3" stroke-width="1.2"/><rect x="4" y="0.5" width="6" height="10" fill="#AFB1B3"/><rect x="7.5" y="6.5" width="9" height="10" fill="#AFB1B3"/><rect x="7.5" y="6.5" width="1.5" height="1.2" fill="#3C3F41"/><rect x="10" y="8" width="4" height="2.2" fill="#3C3F41"/><rect x="10" y="13" width="4" height="3.5" fill="#3C3F41"/><rect x="11.2" y="14" width="1.6" height="2.5" fill="#AFB1B3"/></svg><svg style="position:absolute;left:410px;top:209px;" width="16" height="10" viewBox="0 0 16 10"><path d="M1 9 Q3 1 9 1 Q13 1 11 5 Q9 9 5 8 Q3 7.5 5 6 L14 4" stroke="#E0662F" stroke-width="2" fill="none"/></svg><svg style="position:absolute;left:411px;top:228px;" width="15" height="14" viewBox="0 0 15 14"><path d="M4 2 V13 M1 10 L4 13 L7 10" stroke="#AFB1B3" stroke-width="1.6" fill="none"/><path d="M11 12 V1 M8 4 L11 1 L14 4" stroke="#AFB1B3" stroke-width="1.6" fill="none"/></svg><svg style="position:absolute;left:412px;top:249px;" width="15" height="15" viewBox="0 0 15 15"><circle cx="7.5" cy="7.5" r="7" fill="#4F9A48"/><text x="4" y="11.5" font-family="Liberation Sans" font-size="10" font-weight="bold" fill="#2F5A2A">G</text></svg><svg style="position:absolute;left:412px;top:270px;" width="15" height="16" viewBox="0 0 15 16"><path d="M0 0 L5 2 V6 L0 4 Z M15 0 L10 2 V6 L15 4 Z" fill="#8C9EAE"/><rect x="4" y="1" width="7" height="14" rx="3.5" fill="#3D7FE0"/><circle cx="7.5" cy="5" r="1.6" fill="#E8F0FF"/><circle cx="7.5" cy="10.5" r="1.8" fill="#E8F0FF"/></svg><svg style="position:absolute;left:412px;top:291px;" width="14" height="14" viewBox="0 0 14 14"><path d="M0 0 H7 L0 7 Z" fill="#EE7A36"/><path d="M7 0 H14 L0 14 V7 Z" fill="#6F8FE0"/><path d="M0 14 L7 7 L14 14 Z" fill="#3FA6E6"/></svg><div style="left:411px;top:60px;width:209px;height:32px;background:transparent;border:3px solid #E3141B"></div>
</body></html>
